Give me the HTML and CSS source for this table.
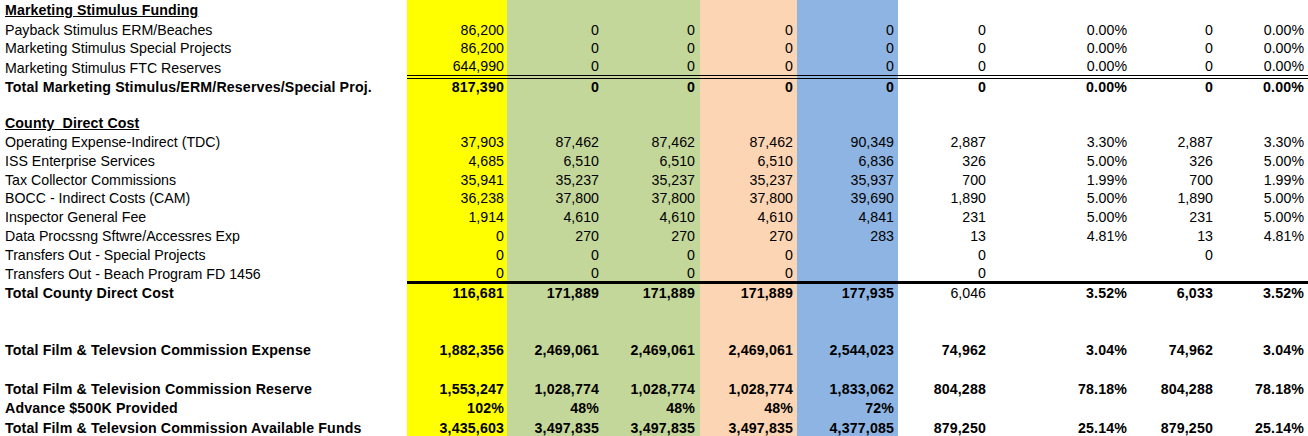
FILE: index.html
```html
<!DOCTYPE html>
<html>
<head>
<meta charset="utf-8">
<link rel="stylesheet" href="styles.css">
</head>
<body>
<div class="sheet">
  <div class="row"><div class="label head">Marketing Stimulus Funding</div><div></div><div></div><div></div><div></div><div></div><div></div><div></div><div></div><div></div></div>
  <div class="row"><div class="label">Payback Stimulus ERM/Beaches</div><div>86,200</div><div>0</div><div>0</div><div>0</div><div>0</div><div>0</div><div>0.00%</div><div>0</div><div>0.00%</div></div>
  <div class="row"><div class="label">Marketing Stimulus Special Projects</div><div>86,200</div><div>0</div><div>0</div><div>0</div><div>0</div><div>0</div><div>0.00%</div><div>0</div><div>0.00%</div></div>
  <div class="row dbl"><div class="label">Marketing Stimulus FTC Reserves</div><div>644,990</div><div>0</div><div>0</div><div>0</div><div>0</div><div>0</div><div>0.00%</div><div>0</div><div>0.00%</div></div>
  <div class="row bold after-dbl"><div class="label">Total Marketing Stimulus/ERM/Reserves/Special Proj.</div><div>817,390</div><div>0</div><div>0</div><div>0</div><div>0</div><div>0</div><div>0.00%</div><div>0</div><div>0.00%</div></div>
  <div class="row"><div class="label"></div><div></div><div></div><div></div><div></div><div></div><div></div><div></div><div></div><div></div></div>
  <div class="row"><div class="label head">County&nbsp; Direct Cost</div><div></div><div></div><div></div><div></div><div></div><div></div><div></div><div></div><div></div></div>
  <div class="row"><div class="label">Operating Expense-Indirect (TDC)</div><div>37,903</div><div>87,462</div><div>87,462</div><div>87,462</div><div>90,349</div><div>2,887</div><div>3.30%</div><div>2,887</div><div>3.30%</div></div>
  <div class="row"><div class="label">ISS Enterprise Services</div><div>4,685</div><div>6,510</div><div>6,510</div><div>6,510</div><div>6,836</div><div>326</div><div>5.00%</div><div>326</div><div>5.00%</div></div>
  <div class="row"><div class="label">Tax Collector Commissions</div><div>35,941</div><div>35,237</div><div>35,237</div><div>35,237</div><div>35,937</div><div>700</div><div>1.99%</div><div>700</div><div>1.99%</div></div>
  <div class="row"><div class="label">BOCC - Indirect Costs (CAM)</div><div>36,238</div><div>37,800</div><div>37,800</div><div>37,800</div><div>39,690</div><div>1,890</div><div>5.00%</div><div>1,890</div><div>5.00%</div></div>
  <div class="row"><div class="label">Inspector General Fee</div><div>1,914</div><div>4,610</div><div>4,610</div><div>4,610</div><div>4,841</div><div>231</div><div>5.00%</div><div>231</div><div>5.00%</div></div>
  <div class="row"><div class="label">Data Procssng Sftwre/Accessres Exp</div><div>0</div><div>270</div><div>270</div><div>270</div><div>283</div><div>13</div><div>4.81%</div><div>13</div><div>4.81%</div></div>
  <div class="row"><div class="label">Transfers Out - Special Projects</div><div>0</div><div>0</div><div>0</div><div>0</div><div></div><div>0</div><div></div><div>0</div><div></div></div>
  <div class="row thick"><div class="label">Transfers Out - Beach Program FD 1456</div><div>0</div><div>0</div><div>0</div><div>0</div><div></div><div>0</div><div></div><div></div><div></div></div>
  <div class="row bold after-thick"><div class="label">Total County Direct Cost</div><div>116,681</div><div>171,889</div><div>171,889</div><div>171,889</div><div>177,935</div><div class="normal">6,046</div><div>3.52%</div><div>6,033</div><div>3.52%</div></div>
  <div class="row tall"><div class="label"></div><div></div><div></div><div></div><div></div><div></div><div></div><div></div><div></div><div></div></div>
  <div class="row tall"><div class="label"></div><div></div><div></div><div></div><div></div><div></div><div></div><div></div><div></div><div></div></div>
  <div class="row tall bold"><div class="label">Total Film &amp; Televsion Commission Expense</div><div>1,882,356</div><div>2,469,061</div><div>2,469,061</div><div>2,469,061</div><div>2,544,023</div><div>74,962</div><div>3.04%</div><div>74,962</div><div>3.04%</div></div>
  <div class="row tall"><div class="label"></div><div></div><div></div><div></div><div></div><div></div><div></div><div></div><div></div><div></div></div>
  <div class="row tall bold"><div class="label">Total Film &amp; Television Commission Reserve</div><div>1,553,247</div><div>1,028,774</div><div>1,028,774</div><div>1,028,774</div><div>1,833,062</div><div>804,288</div><div>78.18%</div><div>804,288</div><div>78.18%</div></div>
  <div class="row tall bold"><div class="label">Advance $500K Provided</div><div>102%</div><div>48%</div><div>48%</div><div>48%</div><div>72%</div><div></div><div></div><div></div><div></div></div>
  <div class="row tall bold"><div class="label">Total Film &amp; Televsion Commission Available Funds</div><div>3,435,603</div><div>3,497,835</div><div>3,497,835</div><div>3,497,835</div><div>4,377,085</div><div>879,250</div><div>25.14%</div><div>879,250</div><div>25.14%</div></div>
</div>
</body>
</html>
```

FILE: styles.css
```css
html, body {
  margin: 0;
  padding: 0;
  background: #ffffff;
}

body {
  font-family: "Liberation Sans", Arial, sans-serif;
  font-size: 14.2px;
  color: #000;
  overflow: hidden;
}

.sheet {
  width: 1308px;
  display: flex;
  flex-direction: column;
}

.row {
  display: grid;
  grid-template-columns: 407px 100px 96px 97px 97px 101px 92px 141px 86px 91px;
  height: 18.75px;
  flex: none;
}

.row:first-child {
  height: 20.35px;
}

.row:first-child > div {
  padding-top: 1.6px;
}

.row.tall {
  height: 19.4px;
}

.row.dbl {
  height: 20.75px;
}

.row.after-dbl {
  height: 16.75px;
}

.row.thick {
  height: 20.25px;
}

.row.after-thick {
  height: 17.25px;
}

.row > div {
  box-sizing: border-box;
  display: flex;
  align-items: center;
  justify-content: flex-end;
  padding-right: 4px;
  white-space: nowrap;
  line-height: 16px;
  overflow: hidden;
}

.row > div:nth-child(2) { background: #ffff00; padding-right: 3px; }
.row > div:nth-child(3) { background: #c4d79b; }
.row > div:nth-child(4) { background: #c4d79b; padding-right: 5px; }
.row > div:nth-child(5) { background: #fcd5b4; }
.row > div:nth-child(6) { background: #8db4e2; }

.row > div.label {
  justify-content: flex-start;
  padding: 0 0 0 5px;
}

.row > div.head {
  font-weight: bold;
  text-decoration: underline;
  letter-spacing: 0.1px;
}

.bold > div {
  font-weight: bold;
  letter-spacing: 0.15px;
}

.bold > div.normal {
  font-weight: normal;
  letter-spacing: 0;
}

.dbl > div:not(.label) {
  border-bottom: 4px double #000;
}

.thick > div:not(.label) {
  border-bottom: 3px solid #000;
}
```
